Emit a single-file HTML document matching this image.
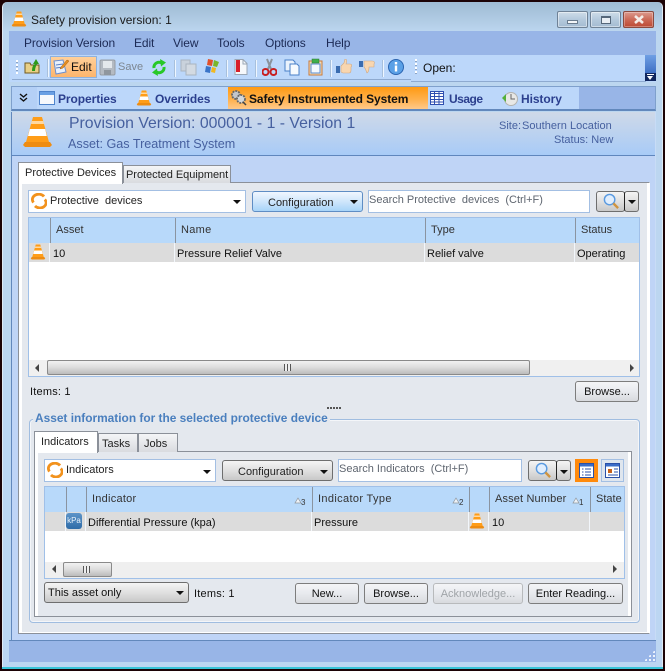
<!DOCTYPE html>
<html><head><meta charset="utf-8"><style>
html,body{margin:0;padding:0;background:#1c0306;width:665px;height:671px;overflow:hidden}
body{position:relative;font-family:"Liberation Sans",sans-serif;font-size:11px;color:#111}
div,span.a,svg.a{position:absolute;box-sizing:border-box}
.t{white-space:nowrap;line-height:14px;height:14px;margin-top:1px}
.m{font-size:12px;color:#1c2a55;margin-top:0;letter-spacing:-.1px}
.n{font-size:12px;font-weight:bold;color:#2b3f8e;margin-top:0;letter-spacing:-.08px}
.btn{border:1px solid #7d7d7d;border-radius:3px;background:linear-gradient(#f4f5f7,#e8eaee 50%,#d8dade);text-align:center;line-height:20px;font-size:11px;white-space:nowrap}
.gb{border:1px solid #6e6e6e;border-radius:3px;background:linear-gradient(#f4f4f4,#e0e0e0 50%,#c8c8c8)}
.inp{background:#fff;border:1px solid #a3bfe3}
.tri{width:0;height:0;border-left:4px solid transparent;border-right:4px solid transparent;border-top:4px solid #111}
.sep{background:#eef6ff;border-left:1px solid #a8c0dc;width:2px}
.gs{width:1px;background:#8a94a0}
.hd{color:#333;font-size:11px}
.wb{border:1px solid #6f8296;border-radius:2px;background:linear-gradient(#cfdde9,#b4c9dc 50%,#a4bcd2);box-shadow:inset 0 0 0 1px rgba(255,255,255,.45)}
</style></head><body>
<svg width="0" height="0" style="position:absolute"><defs>
<symbol id="cone" viewBox="0 0 29 32"><path d="M10 1h9l7 25H3z" fill="#ff9d18"/><path d="M8.800 5h11.400l.8 3H8z" fill="#ffd9a0"/><path d="M6.800 13h15.400l1.600 7H5z" fill="#fff"/><path d="M2 26h25l2 3-2 2H2l-2-2z" fill="#ee8c12"/></symbol>
<symbol id="cyc" viewBox="0 0 16 16"><path d="M2.500 9.500A6 5 0 0 1 13 3.500" fill="none" stroke="#f2921d" stroke-width="2.800"/><path d="M13.800 6.500A6 5 0 0 1 4 13" fill="none" stroke="#f2921d" stroke-width="2.800"/></symbol>
<symbol id="mag" viewBox="0 0 18 18"><circle cx="7" cy="7" r="5.500" fill="#e0eefe" stroke="#5a9ae0" stroke-width="1.500"/><path d="M11 11l5 5" stroke="#cf9440" stroke-width="2.500"/></symbol>
</defs></svg>

<!-- window -->
<div style="left:2px;top:2px;width:661px;height:666px;border-radius:5px 5px 0 0;background:linear-gradient(#9fbbd3 0,#bcd6ef 30px,#bcd6f2 100%);border-left:1px solid #dfeaf4;border-right:1px solid #dfeaf4"></div>
<div style="left:2px;top:667px;width:661px;height:2px;background:#38c4d8"></div>
<svg class="a" style="left:11px;top:11px" width="16" height="16"><use href="#cone"/></svg>
<div class="t" style="left:31px;top:13px;font-size:12px;color:#1a1a1a;margin-top:0">Safety provision version: 1</div>

<!-- window buttons -->
<div class="wb" style="left:557px;top:11px;width:31px;height:17px"><div style="left:9px;top:8px;width:11px;height:4px;background:#f4f6f8;border:1px solid #6a7c8e"></div></div>
<div class="wb" style="left:590px;top:11px;width:31px;height:17px"><div style="left:10px;top:4px;width:10px;height:8px;background:#e8eef4;border:1px solid #55677a;border-top-width:2px"></div></div>
<div style="left:623px;top:11px;width:31px;height:17px;border:1px solid #8a4a40;border-radius:2px;background:linear-gradient(#dc9a8e,#cc6a58 50%,#bc4a34);box-shadow:inset 0 0 0 1px rgba(255,255,255,.3)"><svg class="a" style="left:9px;top:2px" width="12" height="11"><path d="M2 2l8 7M10 2l-8 7" stroke="#f4ece8" stroke-width="2.600"/></svg></div>

<!-- menu -->
<div style="left:9px;top:31px;width:647px;height:24px;background:#98b5e7"></div>
<div class="t m" style="left:24px;top:36px">Provision Version</div>
<div class="t m" style="left:134px;top:36px">Edit</div>
<div class="t m" style="left:173px;top:36px">View</div>
<div class="t m" style="left:217px;top:36px">Tools</div>
<div class="t m" style="left:265px;top:36px">Options</div>
<div class="t m" style="left:326px;top:36px">Help</div>

<!-- toolbar -->
<div style="left:9px;top:55px;width:647px;height:27px;background:#bcd7fa"></div>
<div style="left:12px;top:79px;width:399px;height:1px;background:#8eaad0"></div>
<div style="left:411px;top:81px;width:235px;height:1px;background:#8eaad0"></div>
<div style="left:645px;top:55px;width:11px;height:26px;background:linear-gradient(#6f9fe4,#3e6fc4 70%,#10265e 70%)"><div style="left:2px;top:19px;width:7px;height:1px;background:#fff"></div><div class="tri" style="left:2px;top:21px;border-left-width:3.500px;border-right-width:3.500px;border-top-color:#fff"></div></div>
<div style="left:16px;top:60px;width:2px;height:14px;background:repeating-linear-gradient(#fff 0 2px,#8da4c4 2px 3px,transparent 3px 4px)"></div>
<svg class="a" style="left:24px;top:58px" width="16" height="16"><path d="M1 5h5l1 2h8v8H1z" fill="#e8cf86" stroke="#6f5a20"/><path d="M8 13c0-4 1-6 3-7H9l3-5 3 5h-2c-1 2-2 4-2 7z" fill="#2f9a1a"/></svg>
<div class="sep" style="left:47px;top:59px;height:18px"></div>
<div style="left:50px;top:56px;width:47px;height:22px;border:1px solid #8fb2de;background:linear-gradient(#ffd09a,#fdb56c)"></div>
<svg class="a" style="left:52px;top:58px" width="17" height="17"><path d="M2 3l9-1 3 12-10 2z" fill="#e8f0fc" stroke="#6a8fd0"/><path d="M4 7l7-1M4 10l7-1" stroke="#5a80c4"/><path d="M9 9l6-7 2 1-6 7-3 1z" fill="#e89020" stroke="#a05a10" stroke-width=".5"/></svg>
<div class="t" style="left:71px;top:60px;font-size:12px;color:#111;margin-top:0">Edit</div>
<svg class="a" style="left:99px;top:59px" width="17" height="17"><rect x="1" y="1" width="15" height="15" rx="1.500" fill="#b4bac2" stroke="#969ca4"/><rect x="4" y="2" width="9" height="7" fill="#e4e8ec"/><rect x="5" y="11" width="7" height="5" fill="#8f969e"/></svg>
<div class="t" style="left:118px;top:60px;font-size:11px;color:#7d8690;margin-top:0">Save</div>
<svg class="a" style="left:151px;top:59px" width="16" height="17"><path d="M3 9A5 5 0 0 1 10.500 4" fill="none" stroke="#28c828" stroke-width="3"/><path d="M9 0l6 3.500-5 4z" fill="#28c828"/><path d="M13 8A5 5 0 0 1 5.500 13" fill="none" stroke="#28c828" stroke-width="3"/><path d="M7 17l-6-3.500 5-4z" fill="#28c828"/></svg>
<div class="sep" style="left:174px;top:60px;height:17px"></div>
<svg class="a" style="left:180px;top:59px" width="17" height="17"><path d="M1 1h9v11H1z" fill="#c9d2dc" stroke="#aab4c0"/><path d="M6 5h10v11H6z" fill="#d3dae2" stroke="#aab4c0"/></svg>
<svg class="a" style="left:203px;top:58px" width="16" height="16"><path d="M5 1l5 1-1 6-5-1z" fill="#e2502a"/><path d="M11 2l5 2-2 5-4-1z" fill="#7ab62a"/><path d="M3 8l5 1-1 6-5-1z" fill="#3a74c8"/><path d="M9 9l4 1-1 5-4-1z" fill="#f0b820"/></svg>
<div class="sep" style="left:226px;top:60px;height:17px"></div>
<svg class="a" style="left:234px;top:59px" width="14" height="16"><path d="M1 .5h8l4 4v11H1z" fill="#f6f8fb" stroke="#9aa6b4"/><rect x="2" y="1" width="4" height="12" fill="#d81f2a"/><path d="M9 1v4h4" fill="none" stroke="#9aa6b4"/></svg>
<div class="sep" style="left:255px;top:60px;height:17px"></div>
<svg class="a" style="left:262px;top:58px" width="15" height="18"><path d="M5 1l4 10M10 1L6 11" stroke="#8a929c" stroke-width="2"/><circle cx="3.500" cy="14" r="3" fill="none" stroke="#c81e20" stroke-width="2"/><circle cx="11.500" cy="14" r="3" fill="none" stroke="#c81e20" stroke-width="2"/></svg>
<svg class="a" style="left:284px;top:59px" width="16" height="17"><path d="M1 1h8l2 2v9H1z" fill="#eaf2fc" stroke="#4a80c8"/><path d="M6 5h7l2 2v9H6z" fill="#f6fafe" stroke="#4a80c8"/></svg>
<svg class="a" style="left:308px;top:58px" width="15" height="18"><rect x="1" y="3" width="13" height="14" fill="#f4dcb8" stroke="#c87a3a"/><rect x="3" y="6" width="9" height="9" fill="#f4f8fe" stroke="#5a8cd0"/><rect x="4" y="1" width="7" height="4" fill="#3fae4a" stroke="#2a7a30" stroke-width=".5"/></svg>
<div class="sep" style="left:330px;top:60px;height:17px"></div>
<svg class="a" style="left:336px;top:59px" width="16" height="15"><rect x="0" y="7" width="4" height="7" fill="#3a6cb0"/><path d="M5 7l3-3 1-4c2 0 2 3 1 5h4c2 0 2 2 1 3v3c0 2-1 3-2 3H7l-2-1z" fill="#f8d6b0" stroke="#d0a880" stroke-width=".6"/></svg>
<svg class="a" style="left:359px;top:60px" width="16" height="15"><rect x="0" y="1" width="4" height="6" fill="#3a6cb0"/><path d="M5 1h8c2 0 3 1 2 3v3h-5c0 2 0 5-2 6-1-2-1-4-3-6z" fill="#f8d6b0" stroke="#d0a880" stroke-width=".6"/></svg>
<div class="sep" style="left:382px;top:60px;height:17px"></div>
<svg class="a" style="left:388px;top:59px" width="16" height="16"><circle cx="8" cy="8" r="7.500" fill="#5aa0e6" stroke="#2a64b0"/><rect x="6.800" y="3" width="2.400" height="2.400" fill="#fff"/><rect x="6.800" y="6.500" width="2.400" height="6" fill="#fff"/></svg>
<div style="left:415px;top:59px;width:2px;height:15px;background:repeating-linear-gradient(#fff 0 2px,#8da4c4 2px 3px,transparent 3px 4px)"></div>
<div class="t" style="left:423px;top:61px;font-size:12px;color:#111;margin-top:0">Open:</div>

<!-- nav -->
<div style="left:11px;top:86px;width:645px;height:25px;border:1px solid #7fa0cc;border-bottom:2px solid #6288bc;background:#98b5e7"></div>
<div style="left:12px;top:87px;width:25px;height:22px;background:#b4d0f6"></div>
<svg class="a" style="left:19px;top:93px" width="9" height="10"><path d="M1 1l3.500 3L8 1M1 5l3.500 3L8 5" fill="none" stroke="#111" stroke-width="1.400"/></svg>
<div style="left:37px;top:87px;width:542px;height:22px;background:#bcd7fa"></div>
<svg class="a" style="left:39px;top:91px" width="16" height="14"><rect x=".5" y=".5" width="15" height="13" fill="#f6f8fc" stroke="#4f84cc"/><rect x="1" y="1" width="14" height="3" fill="#6aa0e4"/></svg>
<div class="t n" style="left:58px;top:92px">Properties</div>
<svg class="a" style="left:136px;top:90px" width="16" height="16"><use href="#cone"/></svg>
<div class="t n" style="left:155px;top:92px">Overrides</div>
<div style="left:228px;top:87px;width:200px;height:22px;background:linear-gradient(#ff9a12,#ffb04a 55%,#ffc98a)"></div>
<svg class="a" style="left:230px;top:89px" width="17" height="17"><circle cx="6" cy="6" r="4" fill="#c2c6cc" stroke="#666" stroke-width="1.800" stroke-dasharray="2 1"/><circle cx="11" cy="10" r="4" fill="#d4d8dc" stroke="#666" stroke-width="1.800" stroke-dasharray="2 1"/><path d="M13 13l3 3" stroke="#444" stroke-width="1.500"/></svg>
<div class="t n" style="left:249px;top:92px;color:#111">Safety Instrumented System</div>
<svg class="a" style="left:430px;top:91px" width="14" height="14"><rect x=".5" y=".5" width="13" height="13" fill="#fff" stroke="#2f4fb0"/><path d="M0 2.500h14M0 5.500h14M0 8.500h14M0 11h14M4.500 0v14M9 0v14" stroke="#2f4fb0"/></svg>
<div class="t n" style="left:449px;top:92px;letter-spacing:-.5px">Usage</div>
<svg class="a" style="left:502px;top:91px" width="16" height="15"><circle cx="9" cy="8" r="6.500" fill="#e8e8e6" stroke="#b4b4b0"/><path d="M9 3v5h4" stroke="#666" fill="none"/><path d="M0 7l4-4v8z" fill="#55b03a"/></svg>
<div class="t n" style="left:521px;top:92px">History</div>

<!-- header -->
<div style="left:11px;top:112px;width:645px;height:44px;background:linear-gradient(#cfd9e8,#a8cbf7);border-bottom:1px solid #5f86bd"></div>
<svg class="a" style="left:23px;top:116px" width="29" height="32"><use href="#cone"/></svg>
<div class="t" style="left:69px;top:115px;font-size:15.800px;line-height:18px;height:18px;color:#46609f;margin-top:0">Provision Version: 000001 - 1 - Version 1</div>
<div class="t" style="left:68px;top:137px;font-size:12.600px;color:#46609f;margin-top:0">Asset: Gas Treatment System</div>
<div class="t" style="left:499px;top:118px;color:#46609f">Site:</div>
<div class="t" style="left:522px;top:118px;color:#46609f;letter-spacing:.03px">Southern Location</div>
<div class="t" style="left:554px;top:132px;color:#46609f">Status: New</div>

<!-- content -->
<div style="left:12px;top:156px;width:644px;height:484px;background:#bfd4f6"></div>
<div style="left:11px;top:112px;width:1px;height:528px;background:#6288bc"></div>
<div style="left:655px;top:112px;width:1px;height:528px;background:#c8dcf6"></div>

<!-- outer tabs panel -->
<div style="left:18px;top:182px;width:632px;height:452px;background:#e4e8ee;border:1px solid #8b9099;border-right-color:#fff;box-shadow:inset 3px 0 0 #fff,inset -2px 0 0 #fff,inset 0 -1px 0 #fff"></div>
<div style="left:123px;top:165px;width:108px;height:18px;border:1px solid #8b9099;border-bottom:0;background:linear-gradient(#f4f5f7,#d9dbdf)"></div>
<div class="t" style="left:126px;top:167px;color:#222;font-size:11px;letter-spacing:-.03px">Protected Equipment</div>
<div style="left:18px;top:162px;width:105px;height:22px;border:1px solid #8b9099;border-bottom:0;background:#fff"></div>
<div class="t" style="left:25px;top:165px;color:#222">Protective Devices</div>

<div class="inp" style="left:28px;top:190px;width:218px;height:23px"></div>
<svg class="a" style="left:31px;top:193px" width="16" height="16"><use href="#cyc"/></svg>
<div class="t" style="left:50px;top:193px;color:#222">Protective&nbsp; devices</div>
<div class="tri" style="left:233px;top:200px"></div>
<div style="left:252px;top:191px;width:111px;height:21px;border:1px solid #5f8dc4;border-radius:3px;background:linear-gradient(#f0f7ff,#cfe6fb 50%,#a8d4f8)"></div>
<div class="t" style="left:268px;top:195px;color:#222">Configuration</div>
<div class="tri" style="left:350px;top:200px"></div>
<div class="inp" style="left:368px;top:190px;width:222px;height:23px"></div>
<div class="t" style="left:369px;top:192px;color:#5f6670">Search Protective&nbsp; devices&nbsp; (Ctrl+F)</div>
<div class="gb" style="left:596px;top:191px;width:29px;height:21px"></div>
<svg class="a" style="left:603px;top:193px" width="17" height="17"><use href="#mag"/></svg>
<div class="gb" style="left:624px;top:191px;width:15px;height:21px;border-left:1px solid #222"></div>
<div class="tri" style="left:628px;top:200px"></div>

<!-- grid 1 -->
<div style="left:28px;top:217px;width:612px;height:160px;background:#fff;border:1px solid #a0c0e8"></div>
<div style="left:29px;top:218px;width:610px;height:25px;background:#b8d9fa"></div>
<div class="gs" style="left:50px;top:218px;height:25px"></div>
<div class="gs" style="left:175px;top:218px;height:25px"></div>
<div class="gs" style="left:425px;top:218px;height:25px"></div>
<div class="gs" style="left:575px;top:218px;height:25px"></div>
<div class="t hd" style="left:56px;top:222px">Asset</div>
<div class="t hd" style="left:181px;top:222px;letter-spacing:.3px">Name</div>
<div class="t hd" style="left:431px;top:222px">Type</div>
<div class="t hd" style="left:581px;top:222px">Status</div>
<div style="left:29px;top:243px;width:610px;height:19px;background:#dcdcdc"></div>
<div style="left:49px;top:243px;width:1px;height:19px;background:#f2f6fb"></div>
<div style="left:174px;top:243px;width:1px;height:19px;background:#f2f6fb"></div>
<div style="left:424px;top:243px;width:1px;height:19px;background:#f2f6fb"></div>
<div style="left:574px;top:243px;width:1px;height:19px;background:#f2f6fb"></div>
<svg class="a" style="left:30px;top:244px" width="16" height="16"><use href="#cone"/></svg>
<div class="t" style="left:53px;top:246px">10</div>
<div class="t" style="left:177px;top:246px">Pressure Relief Valve</div>
<div class="t" style="left:427px;top:246px">Relief valve</div>
<div class="t" style="left:577px;top:246px">Operating</div>
<div style="left:29px;top:360px;width:610px;height:16px;background:#f0f0f0"></div>
<div style="left:35px;top:364px;width:0;height:0;border-top:4px solid transparent;border-bottom:4px solid transparent;border-right:4px solid #444"></div>
<div style="left:630px;top:364px;width:0;height:0;border-top:4px solid transparent;border-bottom:4px solid transparent;border-left:4px solid #444"></div>
<div style="left:47px;top:360px;width:483px;height:15px;border:1px solid #8a8a8a;border-radius:2px;background:linear-gradient(#f2f2f2,#dcdcdc 50%,#bcbcbc)"></div>
<div style="left:284px;top:364px;width:7px;height:7px;background:repeating-linear-gradient(90deg,#555 0 1px,#eee 1px 3px)"></div>

<div class="t" style="left:30px;top:384px;letter-spacing:.2px">Items: 1</div>
<div class="btn" style="left:575px;top:381px;width:64px;height:21px">Browse...</div>
<div style="left:327px;top:407px;width:14px;height:2px;background:repeating-linear-gradient(90deg,#555 0 2px,transparent 2px 3px)"></div>

<!-- group -->
<div style="left:29px;top:419px;width:611px;height:204px;border:1px solid #a0bde0;border-radius:4px;box-shadow:inset 0 0 0 1px #f4f6f9"></div>
<div class="t" style="left:33px;top:410px;padding:0 2px;background:#e4e8ee;font-weight:bold;font-size:11.900px;color:#4a7fbe">Asset information for the selected protective device</div>

<!-- inner tabs -->
<div style="left:34px;top:451px;width:598px;height:166px;background:#e4e8ee;border:1px solid #8b9099;box-shadow:inset 3px 0 0 #fff,inset -3px 0 0 #fff"></div>
<div style="left:98px;top:433px;width:40px;height:19px;border:1px solid #8b9099;border-bottom:0;background:linear-gradient(#f4f5f7,#d9dbdf)"></div>
<div class="t" style="left:102px;top:436px;color:#222">Tasks</div>
<div style="left:138px;top:433px;width:40px;height:19px;border:1px solid #8b9099;border-bottom:0;background:linear-gradient(#f4f5f7,#d9dbdf)"></div>
<div class="t" style="left:144px;top:436px;color:#222">Jobs</div>
<div style="left:34px;top:431px;width:64px;height:22px;border:1px solid #8b9099;border-bottom:0;background:#fff"></div>
<div class="t" style="left:41px;top:434px;color:#222">Indicators</div>

<div class="inp" style="left:44px;top:459px;width:172px;height:23px"></div>
<svg class="a" style="left:47px;top:462px" width="16" height="16"><use href="#cyc"/></svg>
<div class="t" style="left:66px;top:462px;color:#222">Indicators</div>
<div class="tri" style="left:203px;top:470px"></div>
<div class="gb" style="left:222px;top:460px;width:111px;height:21px"></div>
<div class="t" style="left:238px;top:464px;color:#222">Configuration</div>
<div class="tri" style="left:320px;top:470px"></div>
<div class="inp" style="left:338px;top:459px;width:184px;height:23px"></div>
<div class="t" style="left:339px;top:461px;color:#5f6670">Search Indicators&nbsp; (Ctrl+F)</div>
<div class="gb" style="left:528px;top:460px;width:29px;height:21px"></div>
<svg class="a" style="left:535px;top:462px" width="17" height="17"><use href="#mag"/></svg>
<div class="gb" style="left:556px;top:460px;width:15px;height:21px;border-left:1px solid #222"></div>
<div class="tri" style="left:560px;top:470px"></div>
<div style="left:575px;top:459px;width:23px;height:23px;background:#ff8a0c"></div>
<svg class="a" style="left:579px;top:463px" width="15" height="15"><rect x=".5" y=".5" width="14" height="14" fill="#fff" stroke="#2a50a8"/><rect x="1" y="1" width="13" height="2.500" fill="#3a6cc8"/><path d="M3 6h1.500M6 6h6M3 9h1.500M6 9h6M3 12h1.500M6 12h6" stroke="#2a50a8"/></svg>
<div style="left:601px;top:459px;width:23px;height:23px;border:1px solid #a3bfe3;background:#dfe6ee"></div>
<svg class="a" style="left:605px;top:463px" width="15" height="15"><rect x=".5" y=".5" width="14" height="14" fill="#fff" stroke="#2a50a8"/><rect x="1" y="1" width="13" height="2.500" fill="#3a6cc8"/><rect x="3" y="6" width="4" height="4" fill="#c8621a"/><path d="M9 6h4M9 9h4M3 12h10" stroke="#2a50a8"/></svg>

<!-- grid 2 -->
<div style="left:44px;top:486px;width:581px;height:93px;background:#fff;border:1px solid #a0c0e8"></div>
<div style="left:45px;top:487px;width:579px;height:25px;background:#b8d9fa"></div>
<div class="gs" style="left:66px;top:487px;height:25px"></div>
<div class="gs" style="left:86px;top:487px;height:25px"></div>
<div class="gs" style="left:312px;top:487px;height:25px"></div>
<div class="gs" style="left:469px;top:487px;height:25px"></div>
<div class="gs" style="left:489px;top:487px;height:25px"></div>
<div class="gs" style="left:590px;top:487px;height:25px"></div>
<div class="t hd" style="left:92px;top:491px;letter-spacing:.25px">Indicator</div>
<div class="t hd" style="left:318px;top:491px;letter-spacing:.35px">Indicator Type</div>
<div class="t hd" style="left:495px;top:491px;letter-spacing:.15px">Asset Number</div>
<div class="t hd" style="left:596px;top:491px;width:27px;overflow:hidden">State</div>
<svg class="a" style="left:294px;top:497px" width="8" height="7"><path d="M4 1l3 5H1z" fill="#eef3f8" stroke="#8f959c" stroke-width=".7"/></svg>
<div class="t" style="left:301px;top:495px;font-size:8px;color:#333">3</div>
<svg class="a" style="left:452px;top:497px" width="8" height="7"><path d="M4 1l3 5H1z" fill="#eef3f8" stroke="#8f959c" stroke-width=".7"/></svg>
<div class="t" style="left:459px;top:495px;font-size:8px;color:#333">2</div>
<svg class="a" style="left:572px;top:497px" width="8" height="7"><path d="M4 1l3 5H1z" fill="#eef3f8" stroke="#8f959c" stroke-width=".7"/></svg>
<div class="t" style="left:579px;top:495px;font-size:8px;color:#333">1</div>
<div style="left:45px;top:512px;width:579px;height:19px;background:#dcdcdc"></div>
<div style="left:65px;top:512px;width:1px;height:19px;background:#f2f6fb"></div>
<div style="left:85px;top:512px;width:1px;height:19px;background:#f2f6fb"></div>
<div style="left:311px;top:512px;width:1px;height:19px;background:#f2f6fb"></div>
<div style="left:468px;top:512px;width:1px;height:19px;background:#f2f6fb"></div>
<div style="left:488px;top:512px;width:1px;height:19px;background:#f2f6fb"></div>
<div style="left:589px;top:512px;width:1px;height:19px;background:#f2f6fb"></div>
<div style="left:66px;top:513px;width:16px;height:16px;border-radius:3px;background:linear-gradient(#5d94c8,#2f6ca8);color:#e8f2fa;font-size:8px;line-height:15px;text-align:center">kPa</div>
<div class="t" style="left:88px;top:515px">Differential Pressure (kpa)</div>
<div class="t" style="left:314px;top:515px">Pressure</div>
<svg class="a" style="left:469px;top:513px" width="16" height="16"><use href="#cone"/></svg>
<div class="t" style="left:492px;top:515px">10</div>
<div style="left:45px;top:562px;width:579px;height:16px;background:#efefef"></div>
<div style="left:52px;top:565px;width:0;height:0;border-top:4px solid transparent;border-bottom:4px solid transparent;border-right:4px solid #444"></div>
<div style="left:613px;top:565px;width:0;height:0;border-top:4px solid transparent;border-bottom:4px solid transparent;border-left:4px solid #444"></div>
<div style="left:63px;top:562px;width:49px;height:15px;border:1px solid #8a8a8a;border-radius:2px;background:linear-gradient(#f2f2f2,#dcdcdc 50%,#bcbcbc)"></div>
<div style="left:83px;top:566px;width:7px;height:7px;background:repeating-linear-gradient(90deg,#555 0 1px,#eee 1px 3px)"></div>

<!-- bottom row -->
<div class="gb" style="left:44px;top:582px;width:145px;height:21px"></div>
<div class="t" style="left:48px;top:585px">This asset only</div>
<div class="tri" style="left:176px;top:591px"></div>
<div class="t" style="left:194px;top:586px;letter-spacing:.2px">Items: 1</div>
<div class="btn" style="left:295px;top:583px;width:64px;height:21px">New...</div>
<div class="btn" style="left:364px;top:583px;width:64px;height:21px">Browse...</div>
<div class="btn" style="left:433px;top:583px;width:90px;height:21px;color:#a0a4a8;border-color:#b8babc">Acknowledge...</div>
<div class="btn" style="left:528px;top:583px;width:95px;height:21px">Enter Reading...</div>

<!-- status -->
<div style="left:9px;top:640px;width:647px;height:22px;background:#98b5e7;border-top:1px solid #6288bc"></div>
<div style="left:644px;top:650px;width:11px;height:11px;background:radial-gradient(circle,#f4f8fe 1px,transparent 1.200px) 0 0/4px 4px;clip-path:polygon(100% 0,100% 100%,0 100%)"></div>
</body></html>
